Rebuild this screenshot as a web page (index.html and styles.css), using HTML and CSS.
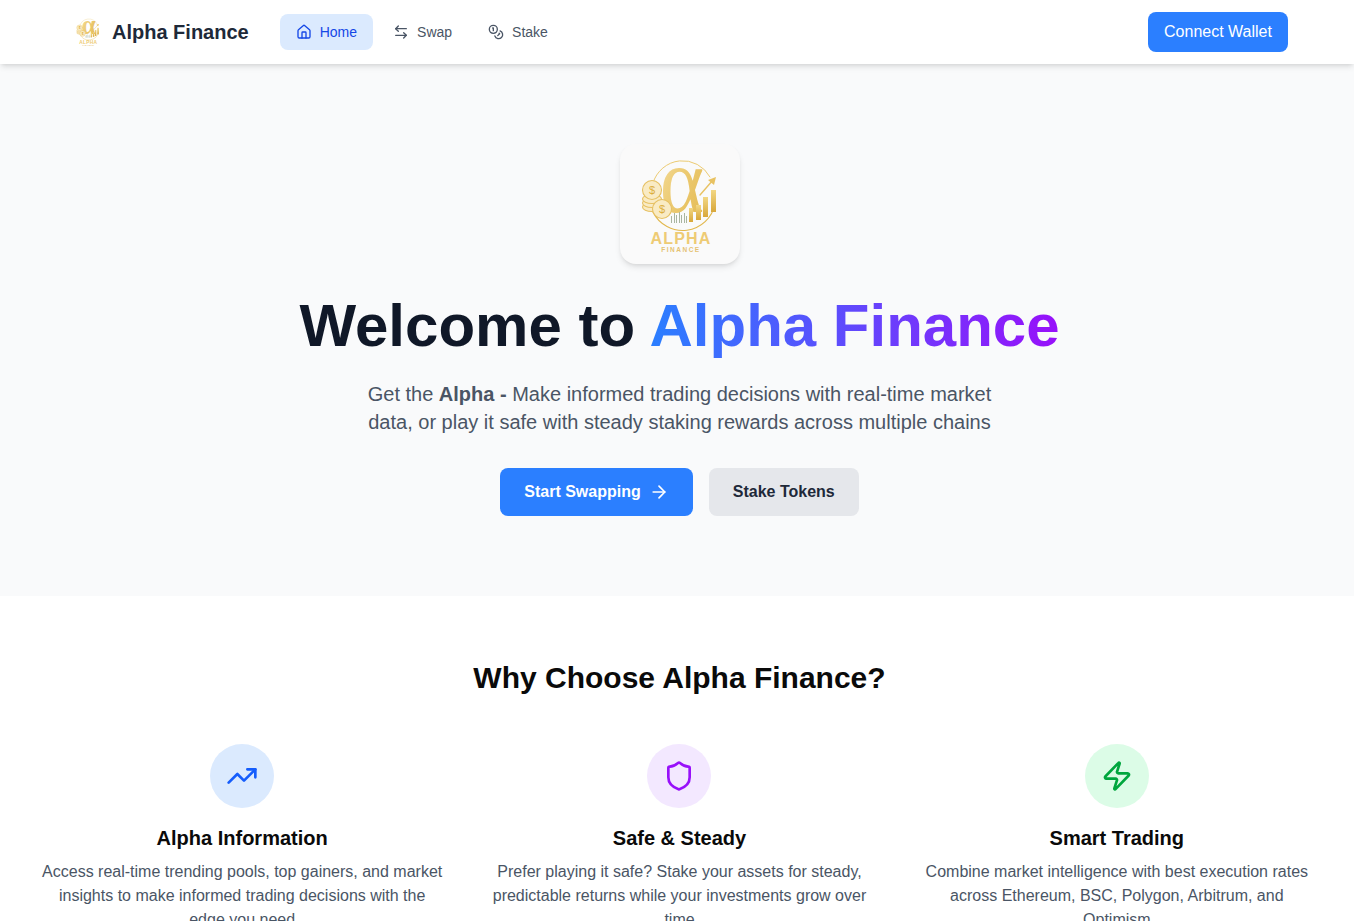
FILE: index.html
```html
<!DOCTYPE html>
<html>
<head>
    <title>Alpha Finance</title>
    <link rel="stylesheet" href="styles.css">
</head>
<body>
    <svg class="defs" width="0" height="0">
        <defs>
            <linearGradient id="gold" x1="0" y1="0" x2="1" y2="1">
                <stop offset="0" stop-color="#f6e2a6"/>
                <stop offset="0.5" stop-color="#ecca72"/>
                <stop offset="1" stop-color="#e2b84e"/>
            </linearGradient>
            <linearGradient id="goldBar" x1="0" y1="0" x2="0" y2="1">
                <stop offset="0" stop-color="#f2d784"/>
                <stop offset="1" stop-color="#d8a73a"/>
            </linearGradient>
            <symbol id="alphaLogo" viewBox="0 0 120 120">
                <path d="M33 39A31 31 0 0 1 90 33" fill="none" stroke="#eccb72" stroke-width="1"/>
                <path d="M33 68A33 33 0 0 0 95 60" fill="none" stroke="#e2b84e" stroke-width="1.2"/>
                <text class="logo-alpha" transform="translate(62 68) scale(0.92 1.02)" fill="url(#gold)">&#945;</text>
                <path d="M80 51 93 36" stroke="#e8c262" stroke-width="1.4" fill="none"/>
                <path d="M88 36 96 33 94 41z" fill="#e8c262"/>
                <g fill="#f9ebc4" stroke="#e6c062" stroke-width="1.1">
                    <ellipse cx="32" cy="63" rx="9.5" ry="4.5"/>
                    <ellipse cx="32" cy="59" rx="9.5" ry="4.5"/>
                    <ellipse cx="32" cy="55" rx="9.5" ry="4.5"/>
                    <circle cx="32" cy="46" r="9.5"/>
                    <circle cx="42" cy="65" r="9.5"/>
                </g>
                <text x="32" y="50" class="logo-dollar">$</text>
                <text x="42" y="69" class="logo-dollar">$</text>
                <g class="logo-thin">
                    <rect x="51" y="72" width="1" height="7"/>
                    <rect x="54" y="69" width="1" height="10"/>
                    <rect x="56" y="71" width="1" height="8"/>
                    <rect x="59" y="68" width="1" height="11"/>
                    <rect x="61" y="71" width="1" height="8"/>
                    <rect x="64" y="69" width="1" height="10"/>
                    <rect x="66" y="72" width="1" height="7"/>
                </g>
                <rect x="69" y="64" width="4" height="14" fill="url(#goldBar)"/>
                <rect x="76" y="61" width="5" height="15" fill="url(#goldBar)"/>
                <rect x="83" y="53" width="5" height="20" fill="url(#goldBar)"/>
                <rect x="91" y="46" width="5" height="22" fill="url(#goldBar)"/>
                <text x="61" y="99.5" class="logo-name">ALPHA</text>
                <text x="61" y="107.5" class="logo-sub">FINANCE</text>
            </symbol>
        </defs>
    </svg>

    <nav class="navbar">
        <div class="nav-left">
            <a class="brand" href="#">
                <svg class="brand-logo"><use href="#alphaLogo"/></svg>
                <span>Alpha Finance</span>
            </a>
            <div class="nav-links">
                <a class="nav-link active" href="#">
                    <svg class="icon-sm" viewBox="0 0 24 24"><path d="M15 21v-8a1 1 0 0 0-1-1h-4a1 1 0 0 0-1 1v8"/><path d="M3 10a2 2 0 0 1 .709-1.528l7-5.999a2 2 0 0 1 2.582 0l7 5.999A2 2 0 0 1 21 10v9a2 2 0 0 1-2 2H5a2 2 0 0 1-2-2z"/></svg>
                    Home
                </a>
                <a class="nav-link" href="#">
                    <svg class="icon-sm" viewBox="0 0 24 24"><path d="M8 3 4 7l4 4"/><path d="M4 7h16"/><path d="m16 21 4-4-4-4"/><path d="M20 17H4"/></svg>
                    Swap
                </a>
                <a class="nav-link" href="#">
                    <svg class="icon-sm" viewBox="0 0 24 24"><circle cx="8" cy="8" r="6"/><path d="M18.09 10.37A6 6 0 1 1 10.34 18"/><path d="M7 6h1v4"/><path d="m16.71 13.88.7.71-2.82 2.82"/></svg>
                    Stake
                </a>
            </div>
        </div>
        <button class="connect-btn">Connect Wallet</button>
    </nav>

    <section class="hero">
        <div class="hero-inner">
            <div class="hero-logo">
                <svg class="hero-logo-img"><use href="#alphaLogo"/></svg>
            </div>
            <h1>Welcome to <span class="gradient-text">Alpha Finance</span></h1>
            <p class="hero-text">Get the <strong>Alpha -</strong> Make informed trading decisions with real-time market data, or play it safe with steady staking rewards across multiple chains</p>
            <div class="hero-actions">
                <a class="btn btn-primary" href="#">
                    Start Swapping
                    <svg class="icon-md" viewBox="0 0 24 24"><path d="M5 12h14"/><path d="m12 5 7 7-7 7"/></svg>
                </a>
                <a class="btn btn-secondary" href="#">Stake Tokens</a>
            </div>
        </div>
    </section>

    <section class="features">
        <div class="features-inner">
            <h2>Why Choose Alpha Finance?</h2>
            <div class="feature-grid">
                <div class="feature">
                    <div class="feature-icon blue">
                        <svg class="icon-lg" viewBox="0 0 24 24"><polyline points="22 7 13.5 15.5 8.5 10.5 2 17"/><polyline points="16 7 22 7 22 13"/></svg>
                    </div>
                    <h3>Alpha Information</h3>
                    <p>Access real-time trending pools, top gainers, and market insights to make informed trading decisions with the edge you need</p>
                </div>
                <div class="feature">
                    <div class="feature-icon purple">
                        <svg class="icon-lg" viewBox="0 0 24 24"><path d="M20 13c0 5-3.5 7.5-7.66 8.95a1 1 0 0 1-.67-.01C7.5 20.5 4 18 4 13V6a1 1 0 0 1 1-1c2 0 4.5-1.2 6.24-2.72a1.17 1.17 0 0 1 1.52 0C14.51 3.81 17 5 19 5a1 1 0 0 1 1 1z"/></svg>
                    </div>
                    <h3>Safe &amp; Steady</h3>
                    <p>Prefer playing it safe? Stake your assets for steady, predictable returns while your investments grow over time</p>
                </div>
                <div class="feature">
                    <div class="feature-icon green">
                        <svg class="icon-lg" viewBox="0 0 24 24"><path d="M4 14a1 1 0 0 1-.78-1.63l9.9-10.2a.5.5 0 0 1 .86.46l-1.92 6.02A1 1 0 0 0 13 10h7a1 1 0 0 1 .78 1.63l-9.9 10.2a.5.5 0 0 1-.86-.46l1.92-6.02A1 1 0 0 0 11 14z"/></svg>
                    </div>
                    <h3>Smart Trading</h3>
                    <p>Combine market intelligence with best execution rates across Ethereum, BSC, Polygon, Arbitrum, and Optimism</p>
                </div>
            </div>
        </div>
    </section>
</body>
</html>
```

FILE: styles.css
```css
* {
    box-sizing: border-box;
}
body {
    margin: 0;
    font-family: "Liberation Sans", Arial, sans-serif;
    color: #0a0a0a;
    background: #fff;
}
a {
    text-decoration: none;
}
.defs {
    display: block;
    height: 0;
}
svg {
    fill: none;
    stroke: currentColor;
    stroke-linecap: round;
    stroke-linejoin: round;
    stroke-width: 2;
}
.brand-logo,
.hero-logo-img {
    stroke: none;
}
symbol text {
    font-family: "Liberation Sans", Arial, sans-serif;
    text-anchor: middle;
    stroke: none;
}
.logo-alpha {
    font-family: "Liberation Serif", serif;
    font-size: 92px;
}
.logo-dollar {
    font-size: 11px;
    fill: #dcae3f;
}
.logo-name {
    font-size: 16px;
    font-weight: bold;
    letter-spacing: 1.2px;
    fill: #eecb74;
}
.logo-sub {
    font-size: 6.5px;
    font-weight: bold;
    letter-spacing: 1.5px;
    fill: #e5c272;
}
.logo-thin {
    fill: #a9b5a0;
}

.navbar {
    position: relative;
    height: 64px;
    padding: 0 66px;
    display: flex;
    align-items: center;
    justify-content: space-between;
    background: #fff;
    box-shadow: 0 4px 6px -1px rgba(0, 0, 0, 0.1), 0 2px 4px -2px rgba(0, 0, 0, 0.1);
}
.nav-left {
    display: flex;
    align-items: center;
}
.brand {
    display: flex;
    align-items: center;
    gap: 6px;
    margin-left: 4px;
    font-size: 20px;
    font-weight: bold;
    color: #1e2939;
}
.brand-logo {
    width: 36px;
    height: 36px;
}
.nav-links {
    display: flex;
    gap: 4px;
    margin-left: 31px;
}
.nav-link {
    display: flex;
    align-items: center;
    gap: 8px;
    height: 36px;
    padding: 0 16px;
    border-radius: 8px;
    font-size: 14px;
    color: #4a5565;
}
.nav-link.active {
    background: #dbeafe;
    color: #1447e6;
}
.icon-sm {
    width: 16px;
    height: 16px;
}
.icon-md {
    width: 20px;
    height: 20px;
}
.icon-lg {
    width: 32px;
    height: 32px;
}
.connect-btn {
    width: 140px;
    height: 40px;
    border: none;
    border-radius: 8px;
    background: #2b7fff;
    color: #fff;
    font-family: inherit;
    font-size: 16px;
    font-weight: 500;
}

.hero {
    background: #f9fafb;
    padding: 80px 0;
}
.hero-inner {
    padding-left: 5px;
    display: flex;
    flex-direction: column;
    align-items: center;
    text-align: center;
}
.hero-logo {
    width: 120px;
    height: 120px;
    border-radius: 16px;
    background: #fafafa;
    box-shadow: 0 4px 6px -1px rgba(0, 0, 0, 0.1), 0 2px 4px -2px rgba(0, 0, 0, 0.1);
    margin-bottom: 24px;
}
.hero-logo-img {
    display: block;
    width: 120px;
    height: 120px;
}
h1 {
    margin: 0 0 16px;
    font-size: 60px;
    line-height: 76px;
    font-weight: bold;
    color: #101828;
}
.gradient-text {
    background: linear-gradient(90deg, #2b7fff, #9810fa);
    -webkit-background-clip: text;
    background-clip: text;
    color: transparent;
}
.hero-text {
    width: 672px;
    margin: 0 0 32px;
    font-size: 20px;
    line-height: 28px;
    color: #4a5565;
}
.hero-actions {
    display: flex;
    gap: 16px;
}
.btn {
    display: flex;
    align-items: center;
    gap: 8px;
    height: 48px;
    padding: 0 24px;
    border-radius: 8px;
    font-size: 16px;
    font-weight: bold;
}
.btn-primary {
    background: #2b7fff;
    color: #fff;
}
.btn-secondary {
    background: #e5e7eb;
    color: #1e2939;
}

.features {
    padding: 64px 0;
}
.features-inner {
    padding-left: 5px;
}
h2 {
    margin: 0 0 48px;
    font-size: 30px;
    line-height: 36px;
    text-align: center;
}
.feature-grid {
    max-width: 1280px;
    margin: 0 auto;
    display: grid;
    grid-template-columns: repeat(3, 1fr);
    gap: 32px;
}
.feature {
    text-align: center;
}
.feature-icon {
    width: 64px;
    height: 64px;
    margin: 0 auto 16px;
    border-radius: 50%;
    display: flex;
    align-items: center;
    justify-content: center;
}
.feature-icon.blue {
    background: #dbeafe;
    color: #155dfc;
}
.feature-icon.purple {
    background: #f3e8ff;
    color: #9810fa;
}
.feature-icon.green {
    background: #dcfce7;
    color: #00a63e;
}
h3 {
    margin: 0 0 8px;
    font-size: 20px;
    line-height: 28px;
}
.feature p {
    margin: 0;
    font-size: 16px;
    line-height: 24px;
    color: #4a5565;
}
```
